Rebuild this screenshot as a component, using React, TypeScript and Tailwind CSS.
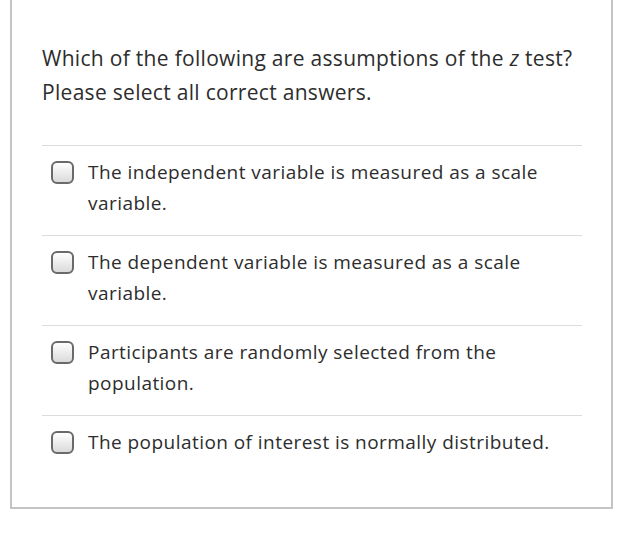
const options = [
  'The independent variable is measured as a scale variable.',
  'The dependent variable is measured as a scale variable.',
  'Participants are randomly selected from the population.',
  'The population of interest is normally distributed.',
];

export default function App() {
  return (
    <div className="min-h-[534px] bg-white pl-[10px] font-['Open_Sans',sans-serif] text-[#2d2d2d]">
      <div className="w-[603px] border-x-2 border-b-2 border-[#c4c4c4] px-[30px] pt-[41px] pb-[33px]">
        <div className="text-[21px] leading-[34px] tracking-[0.3px] w-[540px]">
          Which of the following are assumptions of the <i>z</i> test?
          <br />
          Please select all correct answers.
        </div>
        <div className="mt-[36px] w-[540px]">
          {options.map(o => (
            <div key={o} className="border-t border-[#dcdcdc] flex items-start pt-[11px] pb-[16px] pl-[9px]">
              <span className="mt-[4px] w-[23px] h-[23px] shrink-0 rounded-[6px] border-2 border-[#6a6a6a] bg-gradient-to-b from-white to-[#dadada]" />
              <span className="ml-[14px] w-[470px] text-[19px] leading-[31px] tracking-[0.45px]">{o}</span>
            </div>
          ))}
        </div>
      </div>
    </div>
  );
}
